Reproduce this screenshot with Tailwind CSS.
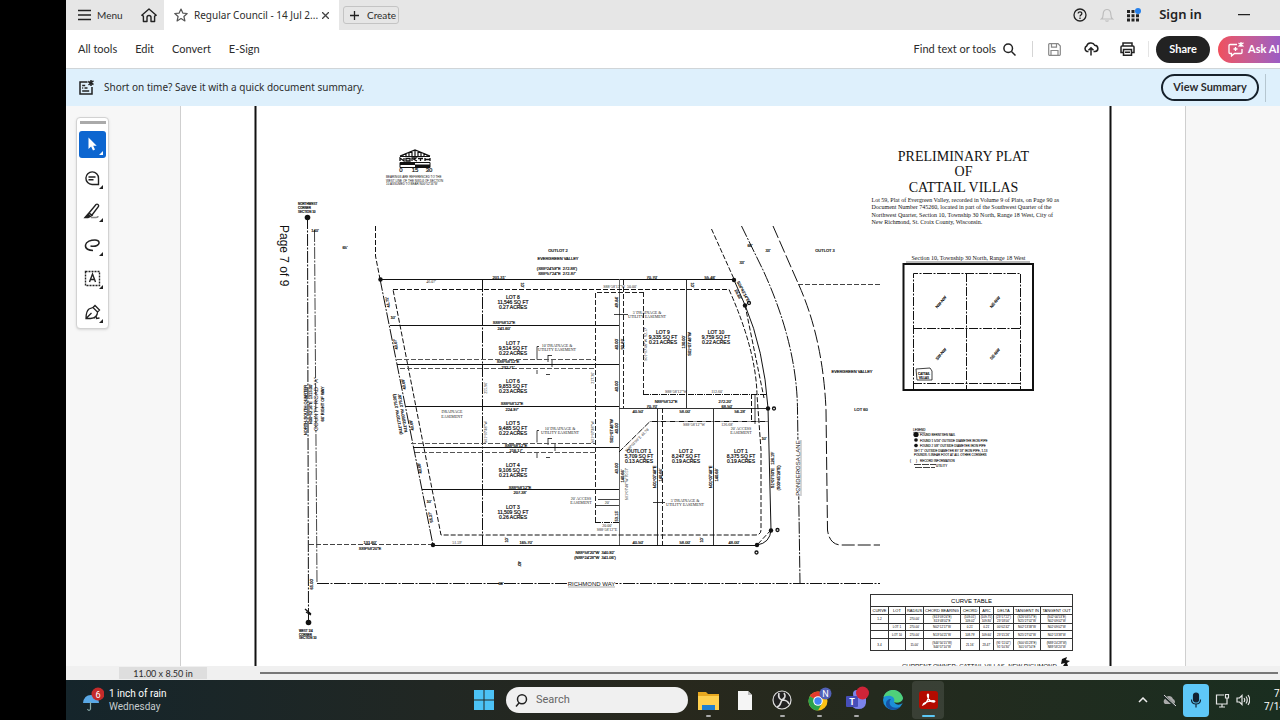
<!DOCTYPE html>
<html lang="en">
<head>
    <meta charset="UTF-8">
    <meta name="viewport" content="width=device-width, initial-scale=1.0">
    <title>Regular Council - 14 Jul 2025</title>
    <script src="https://cdn.jsdelivr.net/npm/@tailwindcss/browser@4"></script>
</head>
<body class="flex h-screen overflow-hidden bg-black pl-[66px] font-['Lato',sans-serif] text-[11px] text-[#2c2c2c]">
<div class="flex min-w-0 flex-1 flex-col bg-white">

    <!-- Tab bar -->
    <header class="flex h-[30px] shrink-0 items-stretch bg-[#e6e6e6]">
        <button class="flex w-[68px] items-center gap-[6px] pl-3 text-[10px]">
            <svg class="h-[12px] w-[13px]" viewBox="0 0 13 12" fill="none" stroke="#222" stroke-width="1.4"><path d="M0 1.5h13M0 6h13M0 10.5h13"/></svg>
            Menu
        </button>
        <button class="flex w-[30px] items-center justify-center" aria-label="Home">
            <svg class="h-[15px] w-[16px]" viewBox="0 0 16 15" fill="none" stroke="#222" stroke-width="1.4" stroke-linejoin="round"><path d="M.8 7.2 8 1l7.2 6.2-1.6 1V13.500H10V9.500a2 2 0 0 0-4 0v4H2.400V8.200z"/></svg>
        </button>
        <div class="flex w-[175px] items-center bg-white pl-[10px]">
            <svg class="h-[14px] w-[14px] shrink-0" viewBox="0 0 14 14" fill="none" stroke="#555" stroke-width="1.2" stroke-linejoin="round"><path d="m7 1 1.800 4.100 4.400.4-3.300 3 1 4.400L7 10.600l-3.900 2.300 1-4.400-3.300-3 4.400-.4z"/></svg>
            <span class="ml-[6px] w-[128px] font-['Noto_Sans',sans-serif] text-[10px] whitespace-nowrap">Regular Council - 14 Jul 2...</span>
            <button aria-label="Close tab"><svg class="h-[7px] w-[7px]" viewBox="0 0 7 7" stroke="#444" stroke-width="1.300"><path d="m0 0 7 7M7 0 0 7"/></svg></button>
        </div>
        <button class="my-[6px] ml-[4px] flex w-[56px] items-center gap-[8px] rounded-[3px] border border-[#c4c4c4] pl-[6px] text-[10px]">
            <svg class="h-[9px] w-[9px] shrink-0" viewBox="0 0 9 9" stroke="#222" stroke-width="1.300"><path d="M4.500 0v9M0 4.500h9"/></svg>
            Create
        </button>
        <div class="ml-auto flex items-center pr-[30px]">
            <button aria-label="Help"><svg class="h-[14px] w-[14px]" viewBox="0 0 14 14" fill="none" stroke="#222" stroke-width="1.300"><circle cx="7" cy="7" r="6"/><path d="M5.200 5.600c0-2.300 3.700-2.200 3.600 0C8.700 7 7 7 7 8.500M7 9.600v1.300"/></svg></button>
            <button class="ml-[13px]" aria-label="Notifications"><svg class="h-[14px] w-[14px]" viewBox="0 0 14 14" fill="none" stroke="#bdbdbd" stroke-width="1.200"><path d="M1.500 11c2-1.500 1.500-4 1.800-6C3.700 2.500 5 1.500 7 1.500S10.300 2.500 10.700 5c.3 2-.2 4.500 1.800 6zM5.500 12.500c.5 1 2.500 1 3 0"/></svg></button>
            <button class="ml-[13px]" aria-label="Apps"><svg class="h-[14px] w-[14px]" viewBox="0 0 14 14" fill="#222"><path d="M0 2h3v3H0zM4.500 2h3v3h-3zM0 6.300h3v3H0zM4.500 6.300h3v3h-3zM9 6.300h3v3H9zM0 10.600h3v3H0zM4.500 10.600h3v3h-3zM9 10.600h3v3H9z"/><circle cx="11" cy="3" r="3" fill="#2680eb"/></svg></button>
            <button class="ml-[18px] w-[43px] font-['Noto_Sans',sans-serif] text-[13px] font-semibold whitespace-nowrap text-[#222]">Sign in</button>
            <button class="ml-[36px]" aria-label="Minimize"><svg class="h-[3px] w-[12px]" viewBox="0 0 12 3" stroke="#222" stroke-width="1.300"><path d="M0 .6h12"/></svg></button>
        </div>
    </header>

    <!-- Toolbar -->
    <nav class="flex h-[39px] shrink-0 items-center border-b border-[#d0d5d8] pl-3 text-[11px]">
        <button class="mr-[18px]">All tools</button>
        <button class="mr-[18px]">Edit</button>
        <button class="mr-[18px]">Convert</button>
        <button>E-Sign</button>
        <div class="ml-auto flex shrink-0 items-center">
            <button class="flex items-center gap-[7px]">Find text or tools
                <svg class="h-[13px] w-[13px]" viewBox="0 0 13 13" fill="none" stroke="#222" stroke-width="1.500"><circle cx="5.200" cy="5.200" r="4.300"/><path d="m8.500 8.500 4 4"/></svg>
            </button>
            <span class="ml-[16px] h-4 w-px bg-[#d5d5d5]"></span>
            <button class="ml-[15px]" aria-label="Save"><svg class="h-[13px] w-[13px]" viewBox="0 0 13 13" fill="none" stroke="#888" stroke-width="1.200"><path d="M.7 1.500q0-.8.8-.8H10l2.300 2.300v8.500q0 .8-.8.8h-10q-.8 0-.8-.8zM3.500.7v3.500h5V.7M3 12.300V7.500h7v4.800"/></svg></button>
            <button class="ml-[22px]" aria-label="Upload"><svg class="h-[14px] w-[16px]" viewBox="0 0 16 14" fill="none" stroke="#222" stroke-width="1.500"><path d="M5.500 9.500H4A3 3 0 0 1 3.700 4c.8-3.600 6.500-4.200 8-.8 4 .3 4.300 6 .3 6.300h-1.500M8 13.500V6M5.500 8.300 8 5.800l2.500 2.500"/></svg></button>
            <button class="ml-[21px]" aria-label="Print"><svg class="h-[14px] w-[15px]" viewBox="0 0 15 14" fill="none" stroke="#222" stroke-width="1.500"><path d="M3 4V1h9v3M3 10.500H1V5q0-1 1-1h11q1 0 1 1v5.500h-2"/><path d="M3.500 7.500h8v5.700h-8zM5 10.300h5"/></svg></button>
            <span class="ml-[13px] h-4 w-px bg-[#e4e4e4]"></span>
            <button class="ml-[7px] h-[27px] w-[54px] rounded-full bg-[#222] font-bold text-white">Share</button>
            <button class="ml-[8px] flex h-[27px] w-[62px] items-center gap-[4px] rounded-l-full bg-linear-to-r from-[#f04f5c] to-[#9c5cc4] pl-[10px] font-bold whitespace-nowrap text-white">
                <svg class="h-[15px] w-[16px] shrink-0" viewBox="0 0 16 15" fill="none" stroke="#fff" stroke-width="1.300"><path d="M9 2.500H2q-1 0-1 1v7q0 1 1 1h1.500V14l3-2.500H13q1 0 1-1V7"/><path d="M7.500 5v4M5.500 7h4M13 0v5M10.500 1l5 3.500M15.500.8 10.500 4.500"/></svg>
                Ask AI
            </button>
        </div>
    </nav>

    <!-- Summary banner -->
    <section class="flex h-[37px] shrink-0 items-center bg-[#def0fc] pl-[13px] text-[11px]">
        <svg class="h-[15px] w-[15px]" viewBox="0 0 15 15" fill="none" stroke="#222" stroke-width="1.500"><path d="M8.500 2H1v12h12V7"/><path d="M3.200 5.500h3M3.200 8h1M5.500 8h3M3.200 11h7M12 0v6M9.200 1.500l5.300 3M14.500.8 9.500 5"/></svg>
        <p class="ml-[10px] font-['Noto_Sans',sans-serif] text-[10px]">Short on time? Save it with a quick document summary.</p>
        <button class="ml-auto h-[27px] w-[98px] rounded-full border-2 border-[#17212b] text-[11px] font-bold">View Summary</button>
        <span class="mr-[14px] ml-[6px] h-7 w-px bg-[#b5c6d0]"></span>
    </section>

    <!-- Document area -->
    <main class="flex min-h-0 flex-1 bg-[#f7f7f7]">
        <aside class="w-[114px] shrink-0 pt-[11px] pl-[10px]">
            <div class="flex w-[33px] flex-col items-center gap-[7px] rounded-[4px] border border-[#d2d2d2] bg-white pt-[3px] pb-[2px] shadow-sm">
                <span class="h-[3px] w-[26px] bg-[#aaa]"></span>
                <button class="h-[27px] w-[27px] rounded-[3px] bg-[#0d66d0]" aria-label="Select"><svg viewBox="0 0 27 27" fill="#fff"><path d="M9.500 6.500v11.500l2.600-2.400 1.900 4 2-1-1.800-3.800h3.500z"/><path d="M24 20v4h-4z"/></svg></button>
                <button class="h-[26px] w-[27px]" aria-label="Comment"><svg viewBox="0 0 27 27" fill="none" stroke="#222" stroke-width="1.400"><path d="M19.500 19.500H13a6.300 6.300 0 1 1 6.500-6.300zM9.500 12h7M9.500 14.800h5"/><path d="M24 20v4h-4z" fill="#222" stroke="none"/></svg></button>
                <button class="h-[27px] w-[27px]" aria-label="Highlight"><svg viewBox="0 0 27 27" fill="none" stroke="#222" stroke-width="1.400"><path d="m10 15 7-8.500q1-.8 2 0t.5 2L13 17zM10 15l3 2.500-2 1.200-2-1.700z"/><path d="M6 19.500 9 16l2 2.500-2 1z" fill="#222"/><path d="M12 19.500h5q2 0 2-1.500" stroke="#888"/><path d="M24 20v4h-4z" fill="#222" stroke="none"/></svg></button>
                <button class="h-[26px] w-[27px]" aria-label="Draw"><svg viewBox="0 0 27 27" fill="none" stroke="#222" stroke-width="1.500"><path d="M14 18.500c-4 0-8-1.500-7.500-5.500C7 9.500 12 8 16 8c5 0 5 4 2 5.500-2.500 1.200-5 .8-6.500.5"/><path d="M24 20v4h-4z" fill="#222" stroke="none"/></svg></button>
                <button class="h-[27px] w-[27px]" aria-label="Text box"><svg viewBox="0 0 27 27" fill="none" stroke="#222" stroke-width="1.400"><rect x="6.500" y="6.500" width="14" height="14" stroke-dasharray="2 1"/><path d="m10.500 17 3-8 3 8M11.500 14.500h4"/><path d="M24 20v4h-4z" fill="#222" stroke="none"/></svg></button>
                <button class="h-[27px] w-[27px]" aria-label="Sign"><svg viewBox="0 0 27 27" fill="none" stroke="#222" stroke-width="1.300"><path d="M7 19.500c0-4 .5-7.500 3-9.500l4-1.500 4.500 4.500c0 4-2 6-7 6.500zM7 19.500l5.500-5.500M14 8.500l2-2 4.500 4.500-2 2M15 19.500c2-3 2.500-3 2.500 0l3-.5"/><path d="M24 20v4h-4z" fill="#222" stroke="none"/></svg></button>
            </div>
        </aside>

        <div class="relative min-w-0 flex-1 overflow-hidden border-x border-[#cfcfcf] bg-white">
            <!-- Plat drawing -->
            <svg class="block w-full font-['Liberation_Sans',sans-serif]" viewBox="181 106 1004 560" fill="#111" font-size="5">
                <g fill="none" stroke="#111">
                    <path stroke-width="2" d="M255.500 106v560M1110.500 106v560"/>
                    <g stroke-width="1">
                        <path d="M380 279.500H734M433 545.500h324"/>
                        <path d="M390 325.500h229M397 364.500h222M406 406.500h213M413 447.500h206M422 489.500h197"/>
                        <path d="M619.500 279v266" stroke="#666"/>
                        <path d="M619 408.500h149M686.500 280v128M657.500 408v137M713.500 408v137" stroke="#333"/>
                        <path d="M734 280 745 305Q764 350 768 408l3 122q-1 13-14 15"/>
                        <path stroke-width=".8" d="M598 499.500h21M614 314.500h14M539 346.500h-2v13M548 355.500h4M548 355v7M552 360v7M537 370v4M546 374.500h4M539 430.500h-2v12M548 438.500h4M548 438v7M555 444v7M537 453v5M546 457.500h4M755 394v30M653 502.500h12M595 505.500h24"/>
                    </g>
                    <g stroke-width="1" stroke-dasharray="12 1.500 2 1.500">
                        <path d="M307.500 217 308.500 622"/>
                        <path d="M314.500 230 317 583" stroke="#444"/>
                        <path d="M380 279 433 545M482.500 280v265"/>
                        <path d="M317 583.500h563"/>
                        <path d="M741.500 226 763 270Q797 344 797.500 410l2.500 173"/>
                    </g>
                    <g stroke-width="1" stroke-dasharray="5 2">
                        <path d="M375.500 226v30L380 279M393 289.500h336Q756 350 757 395l4 55v80q0 5-6 5H441L393 289.500"/>
                        <path d="M397 359.500h198M400 368.500h195M411 443.500h184M415 452.500h180" stroke="#555"/>
                        <path d="M595.500 522V292.500h48M643.500 292v102M623.500 280v128M662.500 408v137" stroke="#222"/>
                        <path d="M643 394.500h124M595 522.500h24M619 452l31-30.500h118" stroke-dasharray="6 1 1 1"/>
                        <path d="M745 305 764 398M711.500 229 734 279M771 530 757 545M751.500 394v28"/>
                        <path d="M309 544.500h124M798 284.500h82" stroke="#444"/>
                    </g>
                    <path stroke-dasharray="13 3" d="M773 226 798 283Q823 338 826 410l1.500 120q2 15 14 15H880"/>
                    <!-- North arrow and scale -->
                    <path stroke-width="1.200" d="m400 156 15-6 15 6M400 156.500h30M403 155v2M406 153v3M409 152v4M412 151v5M415 150v6M418 151v5M421 152v4M424 153v3M427 155v2"/>
                    <path stroke-width="1.300" d="M400 161v-3l4 3v-3M406 158.500h4v2.500h-4zM412 161v-3h4l-2 1.500 3 1.500M418 158.500h5M420.500 158v3M425 158v3M430 158v3M425 159.500h5"/>
                    <path stroke-width="1" d="M400 162.500h30v5h-30z"/><path stroke-width="3" d="M400 163.500h15M415 166h15"/>
                    <!-- Section map -->
                    <rect x="903.500" y="264" width="129.500" height="126" stroke-width="2"/>
                    <path stroke-dasharray="9 1.500 2 1.500" d="M913.500 390V273.500h107V390M913 328.500h107M913 383.500h107M966.500 273v117"/>
                    <path d="m916 369 14-1 2 3v9h-15z" stroke-width=".8"/>
                </g>
                <path d="M906 261h124v2H906z" fill="#bbb"/>
                <g>
                    <circle cx="307.500" cy="217.500" r="2.800"/><circle cx="308.500" cy="622.500" r="2.800"/><circle cx="380.500" cy="279.500" r="2.200"/><circle cx="433" cy="545" r="2.200"/><circle cx="734" cy="280" r="2.200"/><circle cx="745" cy="305.500" r="2.200"/><circle cx="768" cy="408.500" r="2.200"/><circle cx="771" cy="530.500" r="2.200"/><circle cx="757" cy="545" r="2.200"/>
                    <g fill="none" stroke="#111" stroke-width="1.300"><circle cx="774" cy="408.500" r="1.500"/><circle cx="777.500" cy="530" r="1.500"/><circle cx="756.500" cy="552.500" r="1.500"/><circle cx="749" cy="303" r="1.500"/><path d="m305 609 6 5M306 612l5 3"/></g>
                </g>

                <!-- Title block -->
                <g font-family="Liberation Serif, serif" text-anchor="middle" font-size="14">
                    <text x="963.500" y="161">PRELIMINARY PLAT</text>
                    <text x="963.500" y="176">OF</text>
                    <text x="963.500" y="192">CATTAIL VILLAS</text>
                    <text x="968.500" y="260" font-size="6">Section 10, Township 30 North, Range 18 West</text>
                </g>
                <g font-family="Liberation Serif, serif" font-size="6">
                    <text x="871.500" y="202">Lot 59, Plat of Evergreen Valley, recorded in Volume 9 of Plats, on Page 90 as</text>
                    <text x="871.500" y="209">Document Number 745260, located in part of the Southwest Quarter of the</text>
                    <text x="871.500" y="217">Northwest Quarter, Section 10, Township 30 North, Range 18 West, City of</text>
                    <text x="871.500" y="224">New Richmond, St. Croix County, Wisconsin.</text>
                </g>
                <text font-size="12" transform="translate(280 225) rotate(90)">Page 7 of 9</text>

                <!-- Lot labels -->
                <g text-anchor="middle" stroke="#111" stroke-width=".2">
                    <text x="513" y="299">LOT 8</text><text x="513" y="304">11,546 SQ FT</text><text x="513" y="309">0.27 ACRES</text>
                    <text x="513" y="344.500">LOT 7</text><text x="513" y="349.500">9,514 SQ FT</text><text x="513" y="354.500">0.22 ACRES</text>
                    <text x="513" y="383">LOT 6</text><text x="513" y="388">9,853 SQ FT</text><text x="513" y="393">0.23 ACRES</text>
                    <text x="513" y="425">LOT 5</text><text x="513" y="430">9,485 SQ FT</text><text x="513" y="435">0.22 ACRES</text>
                    <text x="513" y="466.500">LOT 4</text><text x="513" y="471.500">9,106 SQ FT</text><text x="513" y="476.500">0.21 ACRES</text>
                    <text x="513" y="508.500">LOT 3</text><text x="513" y="513.500">11,509 SQ FT</text><text x="513" y="518.500">0.26 ACRES</text>
                    <text x="663" y="333.500">LOT 9</text><text x="663" y="338.500">9,335 SQ FT</text><text x="663" y="343.500">0.21 ACRES</text>
                    <text x="716" y="333.500">LOT 10</text><text x="716" y="338.500">9,759 SQ FT</text><text x="716" y="343.500">0.22 ACRES</text>
                    <text x="639" y="453">OUTLOT 1</text><text x="639" y="458">5,709 SQ FT</text><text x="639" y="463">0.13 ACRES</text>
                    <text x="686" y="453">LOT 2</text><text x="686" y="458">8,247 SQ FT</text><text x="686" y="463">0.19 ACRES</text>
                    <text x="741" y="453">LOT 1</text><text x="741" y="458">8,375 SQ FT</text><text x="741" y="463">0.19 ACRES</text>
                </g>

                <!-- Bearings and distances -->
                <g text-anchor="middle" font-size="4" stroke="#111" stroke-width=".2">
                    <text x="558" y="252">OUTLOT 2</text><text x="558" y="260">EVERGREEN VALLEY</text>
                    <text x="557" y="270">(S88°24'59"E &#160;272.88')</text><text x="557" y="275">S88°57'24"E &#160;272.87'</text>
                    <text x="825" y="252">OUTLOT 3</text><text x="852" y="373">EVERGREEN VALLEY</text><text x="861" y="411">LOT 60</text>
                    <text x="499" y="279">201.31'</text><text x="652" y="279">70.70'</text><text x="710" y="279">55.46'</text>
                    <text x="504" y="324">S88°58'12"E</text><text x="504" y="330">241.60'</text>
                    <text x="508" y="363">S88°58'12"E</text><text x="508" y="369">232.71'</text>
                    <text x="512" y="405">S88°58'12"E</text><text x="512" y="411">224.97'</text>
                    <text x="516" y="447">S88°58'12"E</text><text x="516" y="452">216.17'</text>
                    <text x="520" y="488.500">S88°58'12"E</text><text x="520" y="494">207.38'</text>
                    <text x="526" y="544">165.70'</text><text x="638" y="544">40.50'</text><text x="685" y="544">58.00'</text><text x="734" y="544">48.00'</text>
                    <text x="666" y="403">N88°58'12"E</text><text x="652" y="407.500">70.70'</text><text x="725" y="403">272.20'</text><text x="727" y="407.500">68.50'</text>
                    <text x="638" y="413">40.50'</text><text x="685" y="413">58.00'</text><text x="740" y="413">56.28'</text>
                    <text x="595" y="553.500">N88°58'20"W &#160;340.92'</text><text x="595" y="558.500">(N88°24'28"W &#160;341.06')</text>
                    <text x="370" y="544">131.60'</text><text x="370" y="549.500">S89°58'20"E</text>
                    <text x="315" y="232">140'</text><text x="345" y="249">65'</text>
                    <text x="750" y="247">66'</text><text x="768" y="252">33'</text><text x="742" y="264">33'</text>
                    <g font-size="3" text-anchor="start">
                        <text x="298" y="205">NORTHWEST</text><text x="298" y="209">CORNER</text><text x="298" y="213">SECTION 10</text>
                        <text x="299" y="632">WEST 1/4</text><text x="299" y="636">CORNER</text><text x="299" y="639">SECTION 10</text>
                    </g>
                    <text x="501" y="585">66'</text><text x="393" y="319">10'</text><text x="429" y="503">10'</text><text x="764" y="440">10'</text>
                    <text transform="translate(521 285) rotate(90)">10'</text><text transform="translate(691 285) rotate(90)">10'</text><text transform="translate(508 540) rotate(-90)">10'</text><text transform="translate(703 540) rotate(-90)">10'</text><text transform="translate(518 564) rotate(90)">40'</text>
                    <text transform="translate(389 302) rotate(-100)">41.71'</text><text transform="translate(397 344) rotate(-100)">40.67'</text><text transform="translate(405 384) rotate(-100)">40.69'</text><text transform="translate(413 425) rotate(-100)">40.69'</text><text transform="translate(421 468) rotate(-100)">40.68'</text><text transform="translate(432 517) rotate(-100)">55.27'</text>
                    <text transform="translate(399 414) rotate(-100)">(N11°17'20"W &#160;275.00')</text><text transform="translate(404 413) rotate(-100)">N11°29'50"W &#160;275.28'</text>
                    <text transform="translate(618 302) rotate(-90)">49.84'</text><text transform="translate(618 344) rotate(-90)">40.00'</text><text transform="translate(624 344) rotate(-90)">92.83'</text><text transform="translate(618 386) rotate(-90)">40.00'</text><text transform="translate(613 431) rotate(-90)">S01°07'48"W</text><text transform="translate(618 428) rotate(-90)">40.00'</text><text transform="translate(618 468) rotate(-90)">43.00'</text><text transform="translate(624 476) rotate(-90)">140.66'</text><text transform="translate(618 516) rotate(-90)">53.15'</text>
                    <text transform="translate(685 342) rotate(-90)">130.00'</text><text transform="translate(691 344) rotate(-90)">S01°07'48"W</text>
                    <text transform="translate(656 477) rotate(-90)">N01°07'48"E</text><text transform="translate(662 475) rotate(-90)">140.66'</text><text transform="translate(712 477) rotate(-90)">N01°07'48"E</text><text transform="translate(718 475) rotate(-90)">140.68'</text>
                    <text transform="translate(774 470) rotate(-90)">S1°07'50"E &#160; 126.19'</text><text transform="translate(780 478) rotate(-90)">(S00°45'28"E)</text>
                    <text transform="translate(742 292) rotate(62)">S26°43'14"E</text><text transform="translate(737 295) rotate(62)">26.83'</text>
                    <text transform="translate(313 584) rotate(-90)">65.00'</text>
                    <text transform="translate(307 410) rotate(-90)">NORTH-SOUTH QUARTER</text><text transform="translate(312 404) rotate(-90)">N00°52'16"E &#160;1315.00'</text><text transform="translate(318 404) rotate(-90)" font-size="6" stroke="none">COUNTY ROAD "A"</text><text transform="translate(324 404) rotate(-90)">66' RIGHT OF WAY</text>
                    <text transform="translate(942 303) rotate(-50)">NW-NW</text><text transform="translate(996 303) rotate(-50)">NE-NW</text><text transform="translate(942 355) rotate(-50)">SW-NW</text><text transform="translate(996 355) rotate(-50)">SE-NW</text>
                    <g font-size="3"><text x="924" y="375">CATTAIL</text><text x="924" y="379">VILLAS</text></g>
                    <text x="401" y="172" font-size="6">0</text><text x="415" y="172" font-size="6">15</text><text x="429" y="172" font-size="6">30</text>
                </g>
                <g font-size="3">
                    <text x="386" y="178">BEARINGS ARE REFERENCED TO THE</text><text x="386" y="182">WEST LINE OF THE NW1/4 OF SECTION</text><text x="386" y="185">10 ASSUMED TO BEAR N00°52'16"W</text>
                </g>
                <g font-family="Liberation Serif, serif" font-size="4" text-anchor="middle" fill="#222">
                    <text x="452" y="413">DRAINAGE</text><text x="452" y="417.500">EASEMENT</text>
                    <text x="557" y="346.500">10' DRAINAGE &amp;</text><text x="557" y="350.500">UTILITY EASEMENT</text>
                    <text x="560" y="430">10' DRAINAGE &amp;</text><text x="560" y="434">UTILITY EASEMENT</text>
                    <text x="647" y="313.500">5' DRAINAGE &amp;</text><text x="647" y="317.500">UTILITY EASEMENT</text>
                    <text x="685" y="501.500">5' DRAINAGE &amp;</text><text x="685" y="505.500">UTILITY EASEMENT</text>
                    <text x="581" y="500">20' ACCESS</text><text x="581" y="503.500">EASEMENT</text>
                    <text x="741" y="430">20' ACCESS</text><text x="741" y="433.500">EASEMENT</text>
                    <text x="620" y="288">S88°58'12"W &#160;50.00'</text><text x="676" y="393">S88°58'12"W</text><text x="717" y="393">112.60'</text><text x="694" y="426">S88°58'12"W</text><text x="727" y="426">126.68'</text>
                    <text x="431" y="283">46.07'</text><text x="457" y="543.500">51.59'</text><text x="607" y="527">20.00'</text><text x="607" y="531">S88°58'12"E</text><text x="607" y="504">20'</text>
                    <text transform="translate(647 344) rotate(-90)">S01°07'48"W &#160;92.17'</text><text transform="translate(594 378) rotate(-90)">217.36'</text><text transform="translate(594 432) rotate(-90)">S01°07'48"W</text><text transform="translate(487 432) rotate(-90)">S01°07'48"W</text><text transform="translate(487 388) rotate(-90)">255.96'</text><text transform="translate(628 484) rotate(-90)">S01°07'48"W 70.57'</text><text transform="translate(638 441) rotate(-45)">N46°03'00"E 43.76'</text>
                </g>
                <g text-anchor="middle" font-size="6" stroke="#fff" stroke-width="2" paint-order="stroke">
                    <text x="591.500" y="586">RICHMOND WAY</text>
                    <text transform="translate(800 468) rotate(-90)">PONDEROSA LANE</text>
                </g>
                <path d="M568 587h47M801 440v56" stroke="#777" stroke-width=".6"/>

                <!-- Legend -->
                <g font-size="3" stroke="#111" stroke-width=".1">
                    <text x="913" y="431" text-decoration="underline">LEGEND</text>
                    <circle cx="916" cy="434.500" r="2.600"/><text x="920" y="436">FOUND BERNTSEN NAIL</text>
                    <circle cx="916" cy="440" r="1.800"/><text x="920" y="441.500">FOUND 1 5/16" OUTSIDE DIAMETER IRON PIPE</text>
                    <circle cx="916" cy="445.500" r="1.800"/><text x="920" y="447">FOUND 2 3/8" OUTSIDE DIAMETER IRON PIPE</text>
                    <text x="914" y="452">SET 1" OUTSIDE DIAMETER BY 18" IRON PIPE, 1.13</text><text x="914" y="456">POUNDS / LINEAR FOOT AT ALL OTHER CORNERS</text>
                    <text x="910" y="461.500">(</text><text x="916" y="461.500">)</text><text x="920" y="461.500">RECORD INFORMATION</text>
                    <path d="M914 464.500h22M915 467.500h20" stroke-width=".8" stroke-dasharray="7 1"/><text x="936" y="466.500">UTILITY</text>
                </g>
                <text x="902" y="668" font-size="6">CURRENT OWNER: CATTAIL VILLAS, NEW RICHMOND</text>
                <path d="m1062 659 5-2-1 3 4 1-3 2 1 3h-5l2-3-4 1z"/>
            </svg>

            <table class="absolute top-[488px] left-[689px] h-[56px] w-[202px] table-fixed border-collapse border border-black text-center font-['Liberation_Sans',sans-serif] text-[4px] leading-[4px] whitespace-nowrap text-black [&_td]:border [&_td]:border-[#333] [&_td]:p-0 [&_th]:border [&_th]:border-[#333] [&_th]:p-0 [&_th]:font-normal">
                <colgroup><col class="w-[18px]"><col class="w-[17px]"><col class="w-[18px]"><col class="w-[37px]"><col class="w-[19px]"><col class="w-[14px]"><col class="w-[20px]"><col class="w-[27px]"><col class="w-[32px]"></colgroup>
                <tr class="h-[12px]"><th colspan="9" class="text-[6px]">CURVE TABLE</th></tr>
                <tr class="h-[8px]"><th>CURVE</th><th>LOT</th><th>RADIUS</th><th>CHORD BEARING</th><th>CHORD</th><th>ARC</th><th>DELTA</th><th>TANGENT IN</th><th>TANGENT OUT</th></tr>
                <tr class="h-[9px] text-[3px]"><td>1-2</td><td></td><td>270.00'</td><td>(S13°09'24"E)<br>S13°48'02"E</td><td>(109.01')<br>109.02'</td><td>(109.75')<br>109.80'</td><td>(23°17'22")<br>23°18'00"</td><td>(S26°03'57"E)<br>N25°27'02"W</td><td>(S02°00'53"E)<br>N02°09'02"W</td></tr>
                <tr class="h-[7px] text-[3px]"><td></td><td>LOT 1</td><td>270.00'</td><td>N02°12'17"W</td><td>0.21'</td><td>0.21'</td><td>00°02'42"</td><td>N02°13'38"W</td><td>N02°09'02"W</td></tr>
                <tr class="h-[8px] text-[3px]"><td></td><td>LOT 10</td><td>270.00'</td><td>N13°50'21"W</td><td>108.79'</td><td>109.60'</td><td>23°15'26"</td><td>N25°27'02"W</td><td>N02°13'38"W</td></tr>
                <tr class="h-[12px] text-[3px]"><td>3-4</td><td></td><td>15.00'</td><td>(S44°50'15"W)<br>S44°57'10"W</td><td>21.16'</td><td>23.47'</td><td>(91°11'02")<br>91°10'30"</td><td>(S00°45'28"E)<br>S01°07'50"E</td><td>(N88°24'28"W)<br>N88°58'20"W</td></tr>
            </table>
        </div>
        <div class="w-[94px] shrink-0"></div>
    </main>

    <!-- Page size and horizontal scroll bar -->
    <div class="flex h-[14px] shrink-0 items-center bg-[#f0f0f0] pl-[53px]">
        <span class="h-[12px] w-[88px] bg-[#dedede] text-center text-[9px] leading-[13px]">11.00 x 8.50 in</span>
        <span class="mr-[2px] ml-[53px] h-[2px] flex-1 bg-[#777]"></span>
    </div>

    <!-- Taskbar -->
    <footer class="flex h-[40px] shrink-0 items-center overflow-hidden bg-linear-to-r from-[#15252b] via-[#28281d] to-[#1a2e20] font-['Roboto',sans-serif] text-white">
        <button class="flex w-[408px] items-center gap-[5px] pl-4 text-left text-[10px] leading-[13px]">
            <svg class="h-[26px] w-[22px]" viewBox="0 0 22 26"><path d="M1 16Q2 8 9 8t8 8z" fill="#5aa9e6"/><path d="M8.500 15v7q-1.500 3-3 0" fill="none" stroke="#8aa" stroke-width="1.200"/><circle cx="16" cy="7" r="6.500" fill="#c42b2b"/><text x="16" y="10.500" text-anchor="middle" font-size="9" fill="#fff">6</text></svg>
            <span>1 inch of rain<br><span class="text-[#c5ccce]">Wednesday</span></span>
        </button>
        <button aria-label="Start"><svg class="h-[20px] w-[20px]" viewBox="0 0 20 20" fill="#4cc2f5"><path d="M0 0h9.500v9.500H0zM10.500 0H20v9.500h-9.500zM0 10.500h9.500V20H0zM10.500 10.500H20V20h-9.500z"/></svg></button>
        <label class="ml-[12px] flex h-[26px] w-[182px] items-center gap-2 rounded-full bg-[#f0f0f0] pl-[9px]">
            <svg class="h-[13px] w-[13px]" viewBox="0 0 13 13" fill="none" stroke="#222" stroke-width="1.500"><circle cx="7" cy="5.300" r="4.500"/><path d="m4 9-3 3.500"/></svg>
            <input type="text" placeholder="Search" aria-label="Search" class="w-[120px] bg-transparent text-[11px] text-black outline-none placeholder:text-[#666]">
        </label>
        <div class="ml-[2px] flex items-center gap-[1px]">
            <button class="h-[38px] w-[36px]" aria-label="File Explorer"><svg viewBox="0 0 36 38"><path d="M8 11h8l2 2h11v15H8z" fill="#e8a820"/><path d="M8 15h21v14H8z" fill="#ffd04f"/><path d="M12 24h13v5H12z" fill="#1f7fd0"/><rect x="16" y="34" width="5" height="2" rx="1" fill="#aaa"/></svg></button>
            <button class="h-[38px] w-[36px]" aria-label="Document"><svg viewBox="0 0 36 38"><path d="M11 10h10l4 4v15H11z" fill="#f5f5f5"/><path d="M21 10v4h4z" fill="#bbb"/></svg></button>
            <button class="h-[38px] w-[36px]" aria-label="OBS Studio"><svg viewBox="0 0 36 38" fill="none" stroke="#ddd" stroke-width="1.200"><circle cx="18" cy="19" r="9" fill="#222"/><path d="M15 12c-1 4 0 6 3 7 4 0 6 1 7 4M18 19c-2 3-1 6-5 7M18 19c3-2 4-4 2-7" stroke-width="1.600"/><rect x="16" y="34" width="5" height="2" rx="1" fill="#aaa" stroke="none"/></svg></button>
            <button class="h-[38px] w-[36px]" aria-label="Chrome"><svg viewBox="0 0 36 38"><circle cx="17" cy="20" r="9.500" fill="#fbc116"/><path d="M17 20 8.800 15.200A9.500 9.500 0 0 1 25.200 15.200z" fill="#e33b2e"/><path d="M17 20 8.800 15.200A9.500 9.500 0 0 0 17 29.500l4-7z" fill="#2ba24c"/><circle cx="17" cy="20" r="4.800" fill="#fff"/><circle cx="17" cy="20" r="3.700" fill="#4285f4"/><circle cx="24.500" cy="12.500" r="6" fill="#5262b8"/><text x="24.500" y="15.800" text-anchor="middle" font-size="9" fill="#fff">N</text><rect x="16" y="34" width="5" height="2" rx="1" fill="#aaa"/></svg></button>
            <button class="h-[38px] w-[36px]" aria-label="Teams"><svg viewBox="0 0 36 38"><path d="M13 16h15v6q-1 6-7.500 6T13 22z" fill="#7b83eb"/><circle cx="19" cy="13" r="4" fill="#7b83eb"/><rect x="8" y="15" width="12" height="11" rx="1" fill="#464eb8"/><text x="14" y="24" text-anchor="middle" font-size="9" font-weight="700" fill="#fff">T</text><circle cx="24.500" cy="12" r="6.500" fill="#cf2438"/><rect x="16" y="34" width="5" height="2" rx="1" fill="#aaa"/></svg></button>
            <button class="h-[38px] w-[36px]" aria-label="Edge"><svg viewBox="0 0 36 38"><circle cx="18" cy="19" r="10" fill="#1c8fd8"/><path d="M8.500 16C11 7 25 6 28 17c0 5-7 7-9 4 2-5-4-8-10.500-5z" fill="#4fd07a"/><path d="M16 18c-4 5 1 11 9 8-4 5-14 3-14-3 0-3 2-5 5-5z" fill="#1553a5"/><path d="M19 21c3 2 8 0 9-3v4q-6 4-9-1z" fill="#23302a"/></svg></button>
            <button class="h-[38px] w-[32px] rounded-[4px] bg-white/10" aria-label="Acrobat"><svg viewBox="0 0 32 38"><rect x="7" y="10" width="19" height="18" rx="3" fill="#b30b00"/><path d="M11 24c3-1 6-6 5.500-10-.2-1.500-1.500-.8-1 1 .8 3.500 3.500 6 6.500 6 1.500-.2.800-1.500-1-1.400-3.500.2-7 1.200-9.500 3.200z" fill="none" stroke="#fff" stroke-width="1.300"/><rect x="10" y="34" width="13" height="2" rx="1" fill="#5cc8f5"/></svg></button>
        </div>
        <div class="ml-auto flex shrink-0 items-center">
            <button aria-label="Hidden icons"><svg class="h-[6px] w-[10px]" viewBox="0 0 10 6" fill="none" stroke="#eee" stroke-width="1.500"><path d="m1 5 4-4 4 4"/></svg></button>
            <svg class="ml-[14px] h-[13px] w-[15px]" viewBox="0 0 15 13"><path d="M3 10a3 3 0 0 1 0-5c1-4 7-4 8 0a3 3 0 0 1 1 5z" fill="#aaa"/><path d="m1 1 12 11" stroke="#1f2b27" stroke-width="2.500"/><path d="m2 1 12 11" stroke="#ddd"/></svg>
            <button class="ml-[6px] flex h-[33px] w-[26px] items-center justify-center rounded-[4px] bg-[#5ec8f8]" aria-label="Microphone"><svg class="h-[16px] w-[12px]" viewBox="0 0 12 16" fill="none" stroke="#123" stroke-width="1.200"><rect x="3.500" y="1" width="5" height="9" rx="2.500" fill="#123"/><path d="M1.500 7.500c0 6 9 6 9 0M6 12v3.500"/></svg></button>
            <svg class="ml-[6px] h-[15px] w-[15px]" viewBox="0 0 15 15" fill="none" stroke="#e5e5e5" stroke-width="1.200"><path d="M9 2H1.500v9H12V8M4 14h6M7 11v3M10.500 1.500h3V5h-3zM12 5v3"/></svg>
            <svg class="ml-[6px] h-[14px] w-[14px]" viewBox="0 0 14 14" fill="none" stroke="#e5e5e5" stroke-width="1.200"><path d="M1 5h2.500L6 2.500v9L3.500 9H1zM8 5q1.500 2 0 4M10 3.500q2.500 3.500 0 7M12 2q3.500 5 0 10"/></svg>
            <p class="ml-[14px] w-[16px] overflow-hidden text-[10px] leading-[13px] whitespace-nowrap"><span class="ml-[10px]">7:02 PM</span><br>7/14/2025</p>
        </div>
    </footer>
</div>
</body>
</html>
